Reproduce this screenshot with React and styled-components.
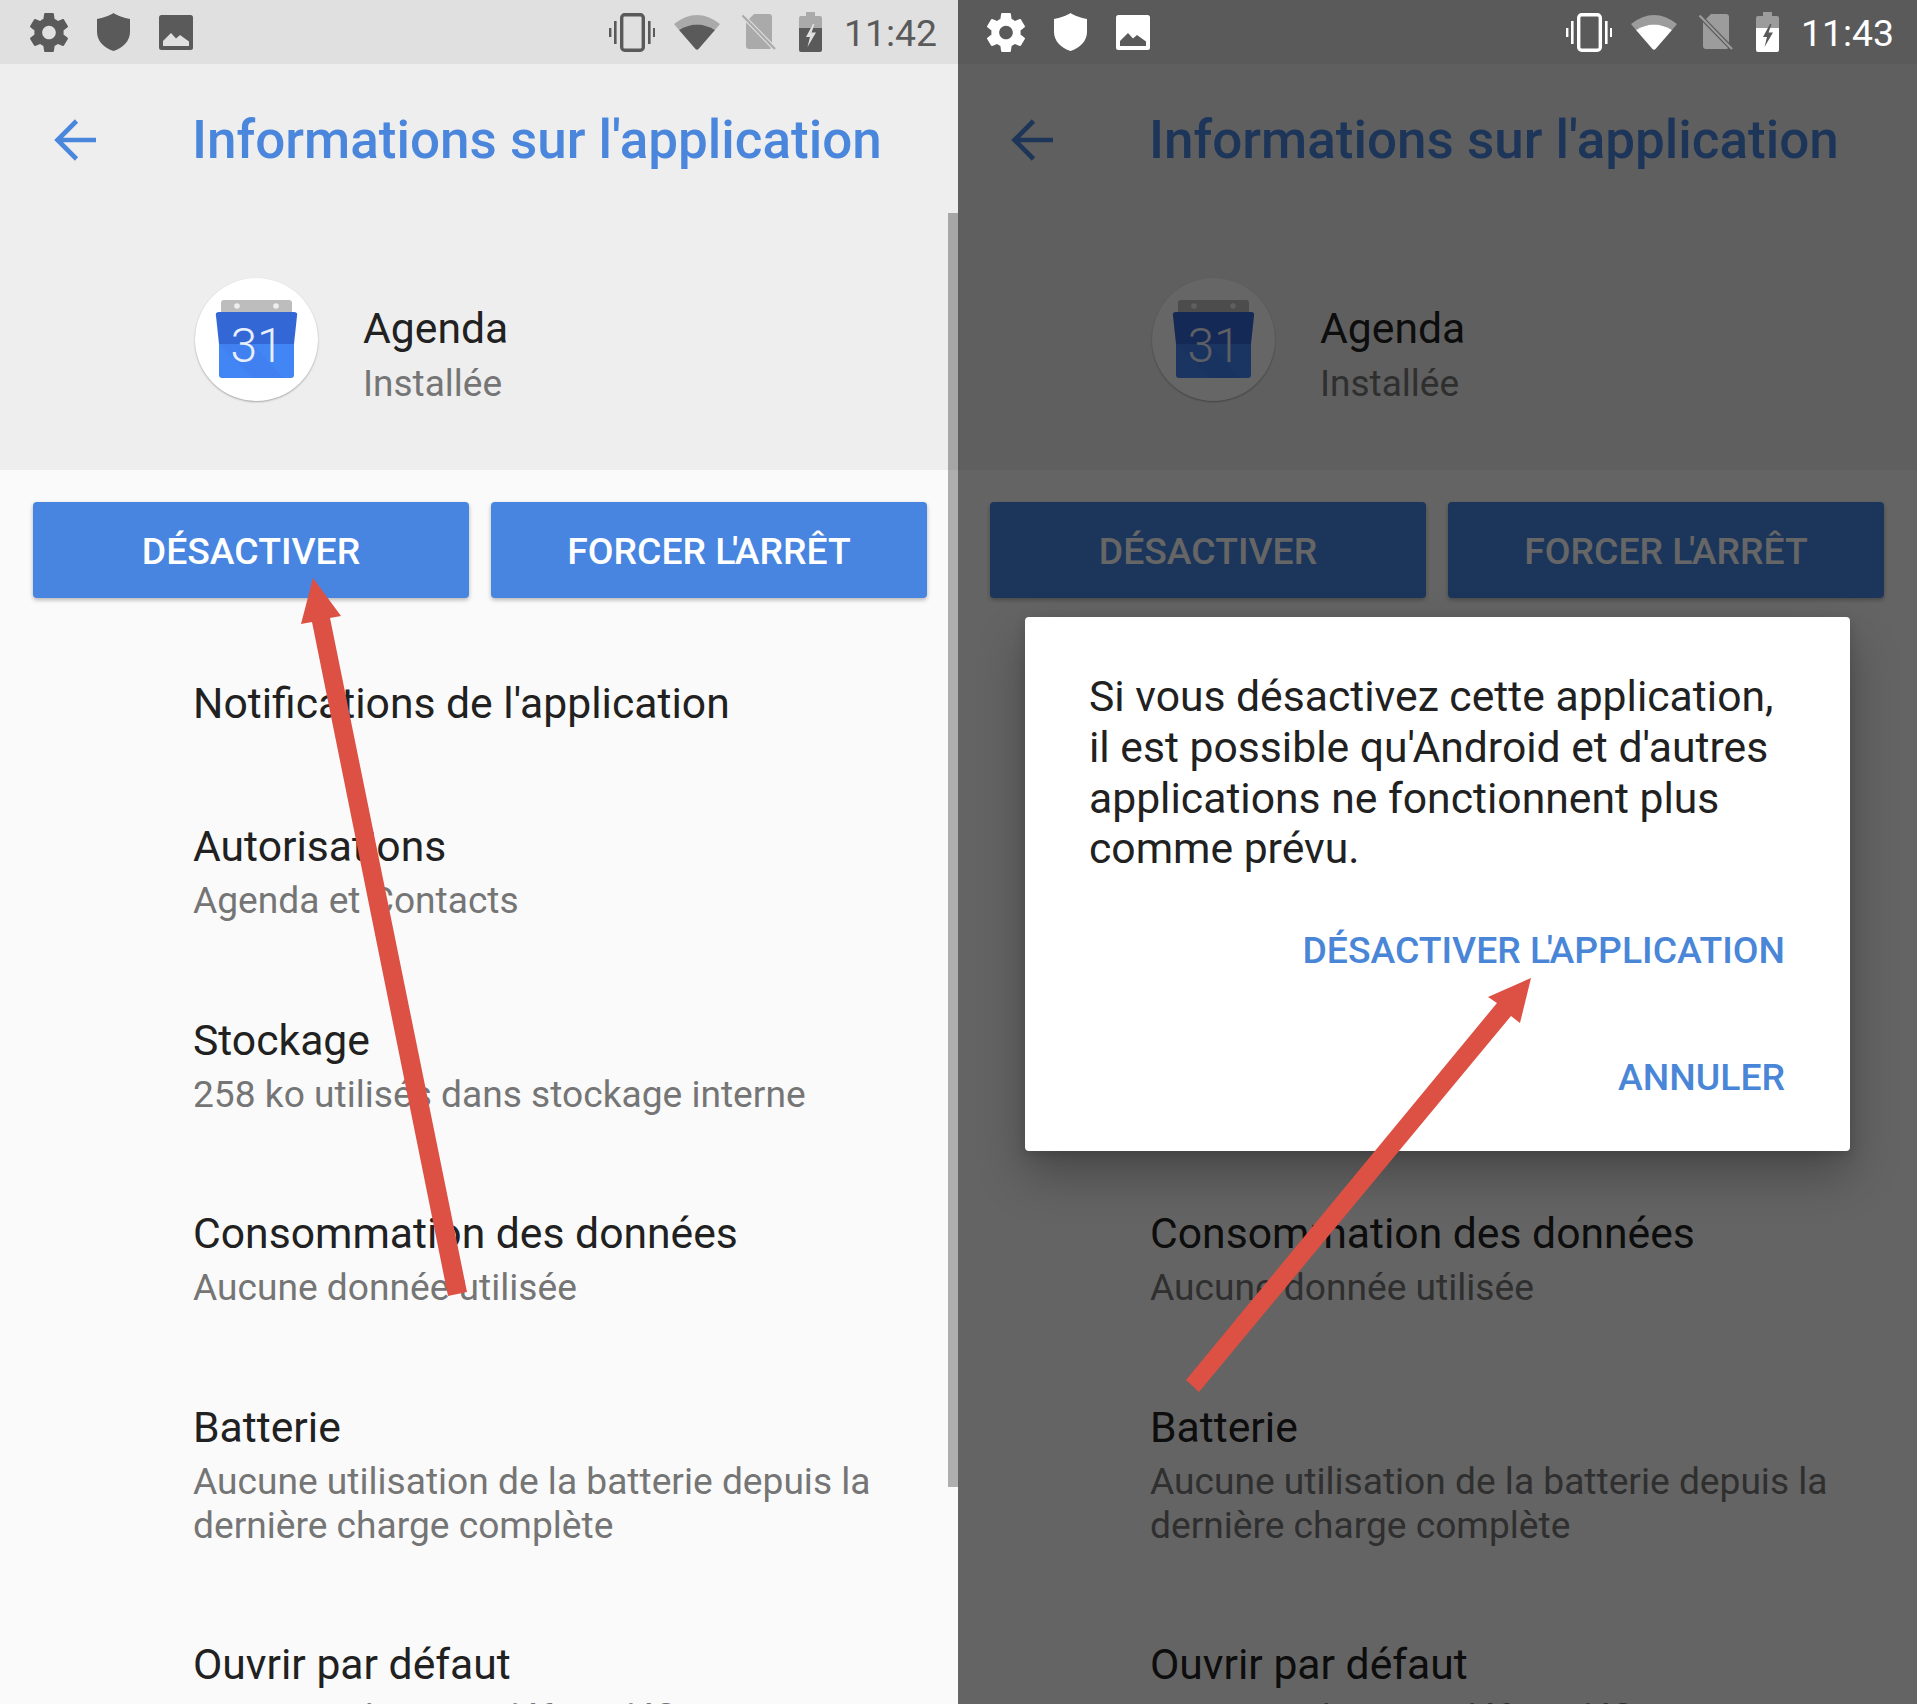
import React from "react";
import styled, { createGlobalStyle } from "styled-components";

const Global = createGlobalStyle`
  html, body { margin: 0; padding: 0; background: #fff; }
  body { font-family: Roboto, "Liberation Sans", sans-serif; }
`;

const Page = styled.div`
  position: relative;
  display: flex;
  width: 1920px;
  height: 1704px;
  overflow: hidden;
`;

const Phone = styled.section`
  position: relative;
  flex: 0 0 ${(p) => p.$width}px;
  height: 1704px;
  overflow: hidden;
  background: #fafafa;
`;

const Screen = styled.div`
  width: 960px;
  margin-left: ${(p) => p.$shift}px;
`;

const Scrim = styled.div`
  position: absolute;
  inset: 0;
  z-index: 1;
  background: rgba(0, 0, 0, 0.6);
`;

const ScrollThumb = styled.div`
  position: absolute;
  right: 0;
  top: 213px;
  width: 10px;
  height: 1274px;
  background: rgba(0, 0, 0, 0.3);
`;

const StatusBar = styled.header`
  display: flex;
  align-items: center;
  height: 64px;
  padding-left: 30px;
  background: #e0e0e0;
`;

const IconGroup = styled.div`
  position: relative;
  z-index: 2;
  display: flex;
  align-items: center;
  gap: 29px;
  color: ${(p) => (p.$dim ? "#ffffff" : "#5a5a5a")};
`;

const RightIcons = styled(IconGroup)`
  gap: 0;
  margin-left: 416px;
`;

const Slot = styled.span`
  display: flex;
  margin-left: ${(p) => p.$left}px;
`;

const TimeText = styled.span`
  margin-left: 22px;
  padding-top: 2px;
  font-size: 37.33px;
  line-height: 62px;
`;

const AppHeader = styled.div`
  height: 406px;
  background: #eeeeee;
`;

const Toolbar = styled.div`
  display: flex;
  align-items: center;
  height: 152px;
  padding-left: 54px;
  color: #4a86dc;
`;

const Title = styled.h1`
  margin: 0 0 0 96px;
  font-size: 53px;
  font-weight: 500;
  line-height: 60px;
`;

const AppInfo = styled.div`
  display: flex;
  align-items: flex-start;
  gap: 45px;
  margin: 62px 0 0 195px;
`;

const AppIcon = styled.div`
  width: 123px;
  height: 123px;
  border-radius: 50%;
  background: #fff;
  box-shadow: 0 1px 2px rgba(0, 0, 0, 0.3);
  svg { display: block; }
`;

const AppText = styled.div`
  padding-top: 23px;
`;

const AppName = styled.div`
  font-size: 42.67px;
  line-height: 54px;
  color: #212121;
`;

const AppStatus = styled.div`
  margin-top: 2px;
  font-size: 37px;
  line-height: 54px;
  color: #757575;
`;

const ButtonRow = styled.div`
  display: flex;
  gap: 22px;
  padding: 32px 0 0 33px;
`;

const ActionButton = styled.button`
  flex: 0 0 436px;
  height: 96px;
  border: 0;
  border-radius: 4px;
  padding: 2px 0 0;
  background: #4785e0;
  color: #fff;
  font-family: inherit;
  font-size: 37.33px;
  font-weight: 500;
  box-shadow: 0 2px 4px rgba(0, 0, 0, 0.28);
`;

const Kerned = styled.span`
  letter-spacing: -3.5px;
`;

const List = styled.div`
  padding: 75px 0 0 193px;
`;

const Row = styled.div`
  margin-bottom: ${(p) => (p.$single ? 83 : 86.5)}px;
`;

const RowTitle = styled.div`
  font-size: 42.67px;
  line-height: 60px;
  color: #212121;
`;

const RowSub = styled.div`
  margin-top: 3px;
  max-width: 700px;
  font-size: 37.15px;
  line-height: 44px;
  color: #757575;
`;

const Dialog = styled.div`
  position: absolute;
  z-index: 3;
  left: 67px;
  top: 617px;
  box-sizing: border-box;
  width: 825px;
  height: 534px;
  padding: 54px 65px 0 64px;
  border-radius: 4px;
  background: #fff;
  box-shadow: 0 24px 48px rgba(0, 0, 0, 0.28), 0 4px 12px rgba(0, 0, 0, 0.15);
`;

const DialogText = styled.p`
  margin: 0;
  font-size: 42.67px;
  line-height: 50.8px;
  color: #212121;
`;

const DialogActions = styled.div`
  display: flex;
  flex-direction: column;
  align-items: flex-end;
  gap: 77px;
  margin-top: 51px;
`;

const DialogAction = styled.span`
  font-size: 37.33px;
  font-weight: 500;
  line-height: 50px;
  color: #4a86d8;
`;

const Annotations = styled.svg`
  position: absolute;
  z-index: 5;
  left: 0;
  top: 0;
  pointer-events: none;
`;

const GEAR =
  "M19.43 12.98c.04-.32.07-.64.07-.98s-.03-.66-.07-.98l2.11-1.65c.19-.15.24-.42.12-.64l-2-3.46c-.12-.22-.39-.3-.61-.22l-2.49 1c-.52-.4-1.08-.73-1.69-.98l-.38-2.65C14.46 2.18 14.25 2 14 2h-4c-.25 0-.46.18-.49.42l-.38 2.65c-.61.25-1.17.59-1.69.98l-2.49-1c-.23-.09-.49 0-.61.22l-2 3.46c-.13.22-.07.49.12.64l2.11 1.65c-.04.32-.07.65-.07.98s.03.66.07.98l-2.11 1.65c-.19.15-.24.42-.12.64l2 3.46c.12.22.39.3.61.22l2.49-1c.52.4 1.08.73 1.69.98l.38 2.65c.03.24.24.42.49.42h4c.25 0 .46-.18.49-.42l.38-2.65c.61-.25 1.17-.59 1.69-.98l2.49 1c.23.09.49 0 .61-.22l2-3.46c.12-.22.07-.49-.12-.64l-2.11-1.65zM12 15.5c-1.93 0-3.5-1.57-3.5-3.5s1.57-3.5 3.5-3.5 3.5 1.57 3.5 3.5-1.57 3.5-3.5 3.5z";

const Gear = () => (
  <svg width="38" height="39" viewBox="2.7 2 18.6 20" fill="currentColor">
    <path d={GEAR} />
  </svg>
);

const Shield = () => (
  <svg width="33" height="38" viewBox="0 0 33 38" fill="currentColor">
    <path d="M16.5 0 C20 2.5 27 5 33 6 V19 C33 28 26 35 16.5 38 C7 35 0 28 0 19 V6 C6 5 13 2.5 16.5 0Z" />
  </svg>
);

const Picture = ({ cut }) => (
  <svg width="34" height="35" viewBox="0 0 34 35" fill="currentColor">
    <rect width="34" height="35" rx="2.5" />
    <path d="M4 31 V26 L12 18 L17 23.5 L21 20 L30 26.5 V31Z" fill={cut} />
  </svg>
);

const Vibrate = () => (
  <svg width="46" height="39" viewBox="0 0 46 39" fill="currentColor">
    <rect x="12.7" y="1.7" width="21.6" height="35.6" rx="3" fill="none" stroke="currentColor" strokeWidth="3.4" />
    <rect x="0" y="15" width="2.4" height="9" />
    <rect x="5" y="8" width="2.6" height="23" />
    <rect x="39" y="8" width="2.6" height="23" />
    <rect x="44" y="15" width="2" height="9" />
  </svg>
);

const Wifi = () => (
  <svg width="46" height="35" viewBox="0 0 46 35" fill="currentColor">
    <path opacity="0.4" d="M0 9 Q23 -9 46 9 L41 15 Q23 4 5 15Z" />
    <path d="M5 15 Q23 4 41 15 L24.5 34 Q23 35.5 21.5 34Z" />
  </svg>
);

const NoSim = ({ cut }) => (
  <svg width="34" height="38" viewBox="0 0 34 38" fill="currentColor">
    <path opacity="0.4" d="M12 1 H27 Q30 1 30 4 V33 Q30 36 27 36 H7 Q4 36 4 33 V9Z" />
    <path d="M0 2 L33 36" stroke={cut} strokeWidth="4.4" />
    <path opacity="0.4" d="M0.5 2.5 L33 36" stroke="currentColor" strokeWidth="2.2" />
  </svg>
);

const Battery = ({ cut }) => (
  <svg width="23" height="40" viewBox="0 0 23 40" fill="currentColor">
    <path opacity="0.4" d="M7 0 H16 V4 H21 Q23 4 23 6 V16 H0 V6 Q0 4 2 4 H7Z" />
    <path d="M0 16 H23 V38 Q23 40 21 40 H2 Q0 40 0 38Z" />
    <path d="M14 12 L7 25 H11 L8.5 35 L17 20.5 H12.6 L15.5 12Z" fill={cut} />
  </svg>
);

const BackArrow = () => (
  <svg width="42" height="42" viewBox="0 0 42 42" fill="none" stroke="currentColor" strokeWidth="4.6">
    <path d="M42 21 H4 M22.5 2 L3.5 21 L22.5 40" />
  </svg>
);

const CalendarIcon = () => (
  <svg width="123" height="123" viewBox="0 0 123 123">
    <path d="M26 36 V25 Q26 22 29 22 H94 Q97 22 97 25 V36Z" fill="#bdbdbd" />
    <circle cx="42" cy="28" r="2.8" fill="#eeeeee" />
    <circle cx="81" cy="28" r="2.8" fill="#eeeeee" />
    <path d="M24 34 H99 Q103 34 102 38 L99 66 H24 L21 38 Q20 34 24 34Z" fill="#3367d6" />
    <path d="M24 66 H99 V97 Q99 100 96 100 H27 Q24 100 24 97Z" fill="#4285f4" />
    <path d="M24 66 H58 L88 100 H58 Z" fill="#3b78e7" opacity="0.3" />
    <text x="62" y="84" textAnchor="middle" fontFamily="Roboto, sans-serif" fontSize="48" fontWeight="300" fill="#e8eefb">31</text>
  </svg>
);

const rows = [
  { title: "Notifications de l'application", single: true },
  { title: "Autorisations", sub: "Agenda et Contacts" },
  { title: "Stockage", sub: "258 ko utilisés dans stockage interne" },
  { title: "Consommation des données", sub: "Aucune donnée utilisée" },
  { title: "Batterie", sub: "Aucune utilisation de la batterie depuis la dernière charge complète" },
  { title: "Ouvrir par défaut", sub: "Aucune valeur par défaut définie" },
];

function PhoneScreen({ dim, time, width, shift }) {
  const cut = dim ? "#5a5a5a" : "#e0e0e0";
  return (
    <Phone $width={width}>
      <Screen $shift={shift}>
        <StatusBar>
          <IconGroup $dim={dim}>
            <Gear />
            <Shield />
            <Picture cut={cut} />
          </IconGroup>
          <RightIcons $dim={dim}>
            <Vibrate />
            <Slot $left={19}><Wifi /></Slot>
            <Slot $left={22}><NoSim cut={cut} /></Slot>
            <Slot $left={23}><Battery cut={cut} /></Slot>
            <TimeText>{time}</TimeText>
          </RightIcons>
        </StatusBar>
        <AppHeader>
          <Toolbar>
            <BackArrow />
            <Title>Informations sur l'application</Title>
          </Toolbar>
          <AppInfo>
            <AppIcon>
              <CalendarIcon />
            </AppIcon>
            <AppText>
              <AppName>Agenda</AppName>
              <AppStatus>Installée</AppStatus>
            </AppText>
          </AppInfo>
        </AppHeader>
        <ButtonRow>
          <ActionButton>DÉSACTIVER</ActionButton>
          <ActionButton>FORCER <Kerned>L'</Kerned>ARRÊT</ActionButton>
        </ButtonRow>
        <List>
          {rows.map((r) => (
            <Row key={r.title} $single={r.single}>
              <RowTitle>{r.title}</RowTitle>
              {r.sub && <RowSub>{r.sub}</RowSub>}
            </Row>
          ))}
        </List>
      </Screen>
      {!dim && <ScrollThumb />}
      {dim && <Scrim />}
      {dim && (
        <Dialog>
          <DialogText>
            Si vous désactivez cette application, il est possible qu'Android et d'autres applications ne fonctionnent plus comme prévu.
          </DialogText>
          <DialogActions>
            <DialogAction>DÉSACTIVER <Kerned>L'</Kerned>APPLICATION</DialogAction>
            <DialogAction>ANNULER</DialogAction>
          </DialogActions>
        </Dialog>
      )}
    </Phone>
  );
}

export default function App() {
  return (
    <Page>
      <Global />
      <PhoneScreen time="11:42" width={958} shift={0} />
      <PhoneScreen dim time="11:43" width={959} shift={-1} />
      <Annotations width="1920" height="1704" viewBox="0 0 1920 1704" fill="#dd5044">
        <polygon points="313,578 341,616 330,618 467,1292 448,1296 312,622 301,624" />
        <polygon points="1531,978 1520,1023 1511,1016 1199,1392 1186,1380 1497,1003 1488,997" />
      </Annotations>
    </Page>
  );
}
